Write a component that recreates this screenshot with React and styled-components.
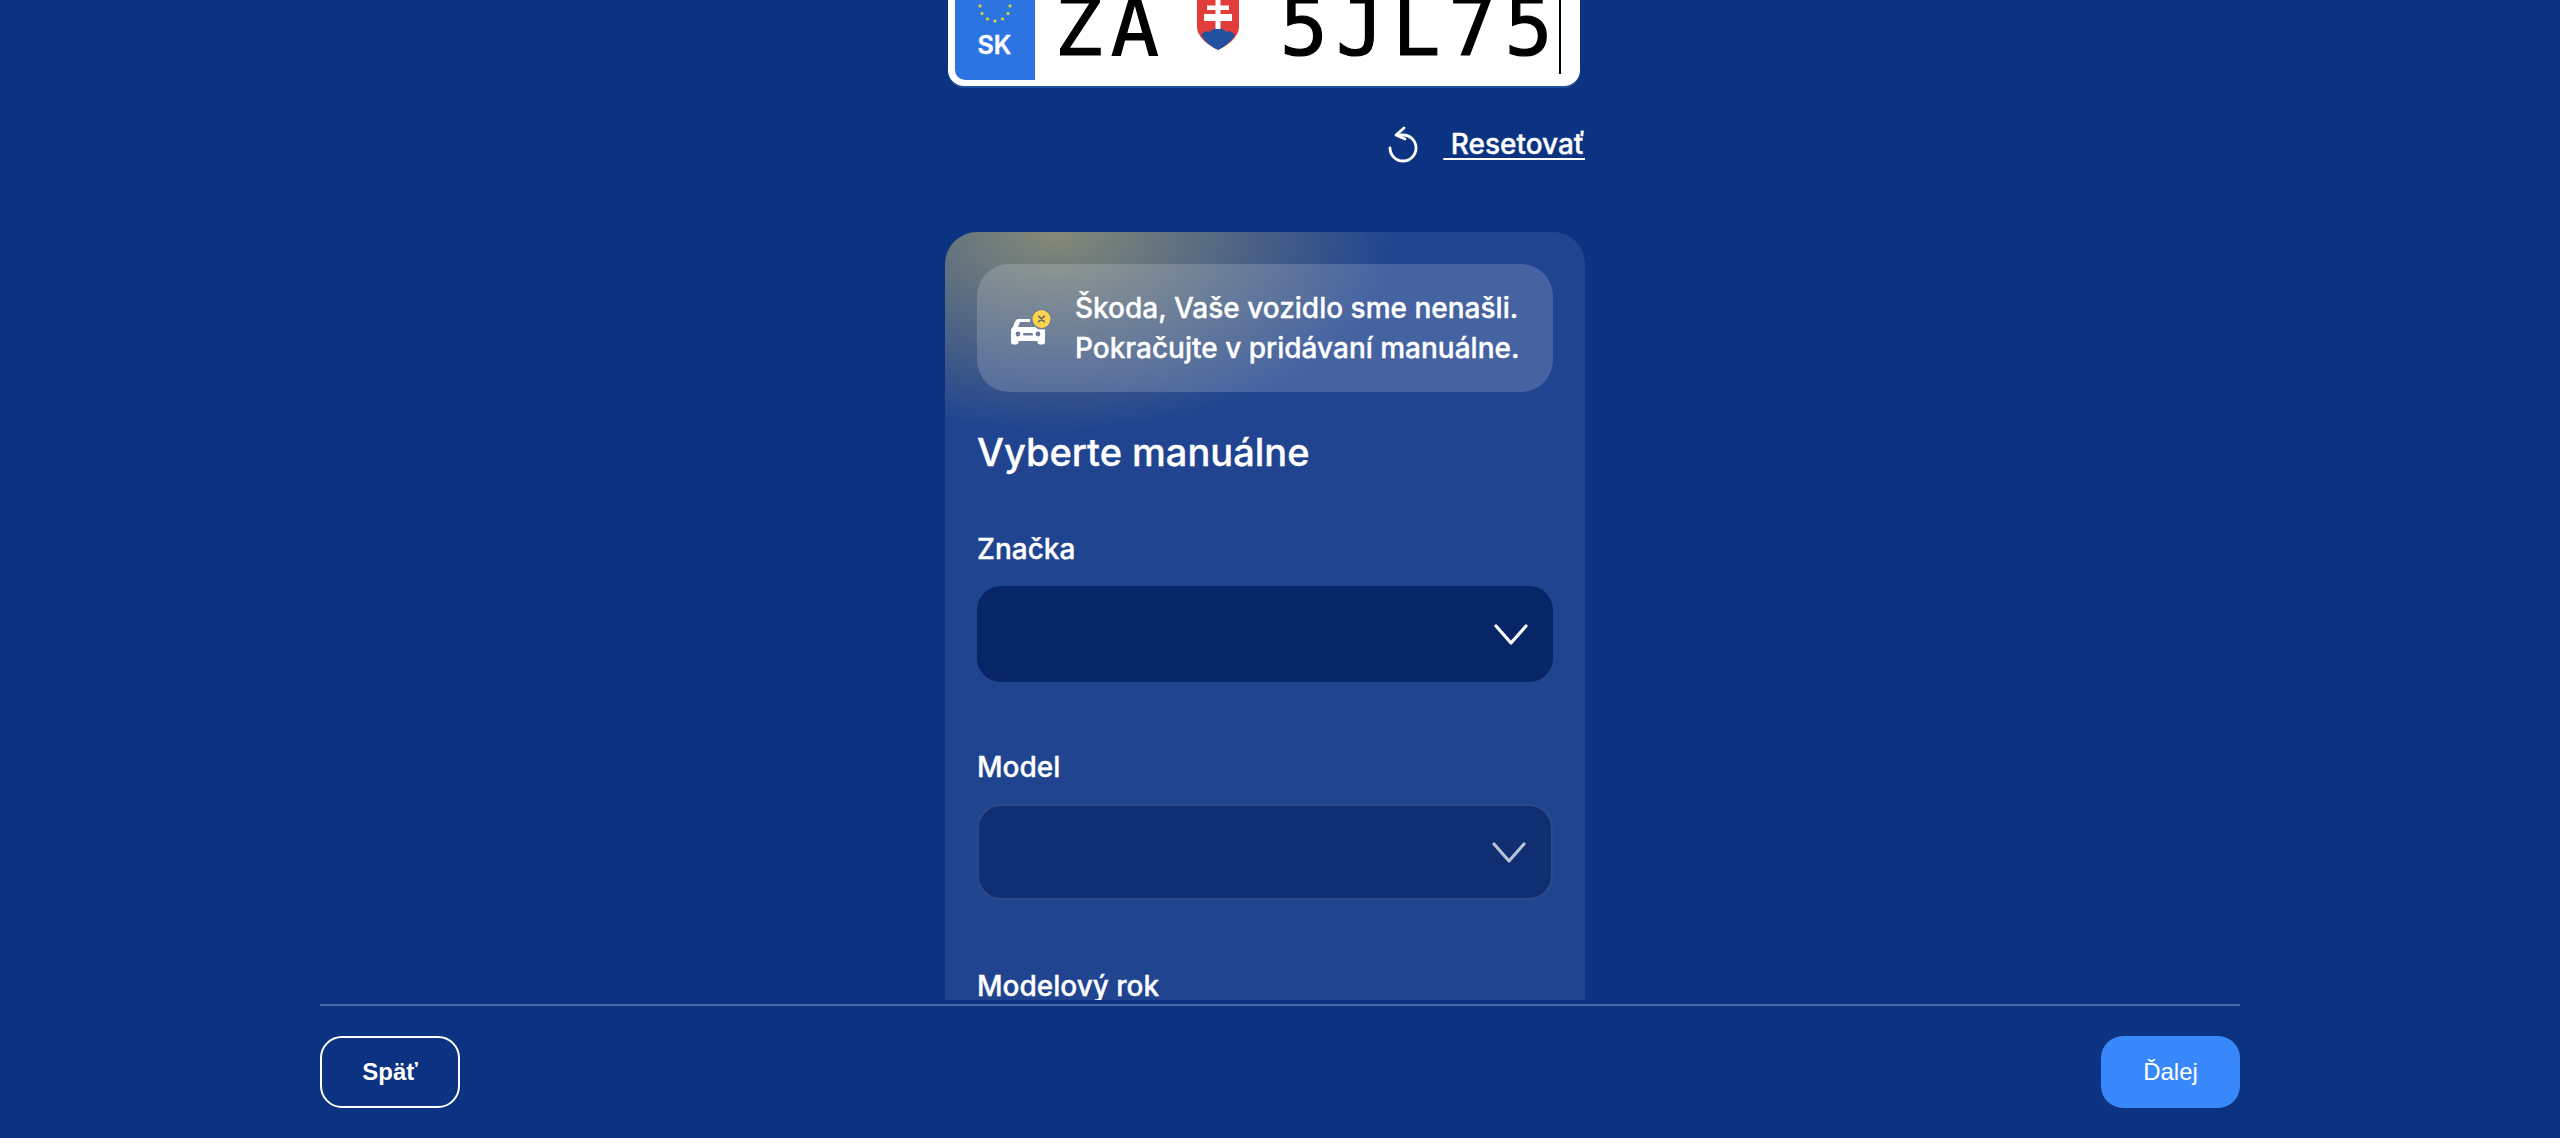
import React from 'react';
import styled, { createGlobalStyle } from 'styled-components';

const GlobalStyle = createGlobalStyle`
  html, body {
    margin: 0;
    padding: 0;
    background: #0c3282;
  }
  * {
    box-sizing: border-box;
  }
`;

const Page = styled.div`
  -webkit-text-stroke: 0.35px #fff;
  background: #0c3282;
  color: #fff;
  display: flex;
  flex-direction: column;
  font-family: Inter, "Noto Sans", sans-serif;
  height: 1138px;
  overflow: hidden;
`;

const Content = styled.main`
  align-items: center;
  display: flex;
  flex-direction: column;
  height: 1000px;
  overflow: hidden;
  padding-right: 30px;
`;

const Plate = styled.div`
  background: #fff;
  border-radius: 16px;
  box-shadow: 0 2px 0 #1f4f9e;
  display: flex;
  flex-shrink: 0;
  height: 140px;
  margin-right: 3px;
  margin-top: -54px;
  padding: 6px 7px;
  width: 632px;
`;

const EuStrip = styled.div`
  align-items: center;
  background: #2b74e2;
  border-bottom-left-radius: 10px;
  display: flex;
  flex-direction: column;
  flex-shrink: 0;
  justify-content: flex-end;
  padding-bottom: 20px;
  width: 80px;
`;

const Country = styled.span`
  font-size: 25px;
  font-weight: 600;
  line-height: 29px;
  margin-top: 5px;
`;

const PlateText = styled.span`
  -webkit-text-stroke: 1.2px #000;
  align-self: flex-end;
  color: #000;
  font-family: "DejaVu Sans Mono", monospace;
  font-size: 80px;
  letter-spacing: 8px;
  line-height: 94px;
  margin-bottom: 5px;
  margin-left: ${p => p.$offset}px;
`;

const Shield = styled.svg`
  align-self: flex-end;
  flex-shrink: 0;
  margin-bottom: 30px;
  margin-left: 30px;
`;

const Caret = styled.span`
  align-self: flex-end;
  background: #000;
  height: 120px;
  margin-bottom: 6px;
  margin-left: -2px;
  width: 2px;
`;

const ResetRow = styled.div`
  align-items: center;
  display: flex;
  flex-shrink: 0;
  gap: 24px;
  justify-content: flex-end;
  margin-top: 39px;
  width: 640px;
`;

const ResetLink = styled.a`
  color: #fff;
  font-size: 28px;
  font-weight: 500;
  line-height: 34px;
  text-decoration: underline;
  text-decoration-thickness: 2px;
  text-underline-offset: 4px;
  white-space: pre;
`;

const Card = styled.section`
  background:
    radial-gradient(ellipse 340px 200px at 110px 0, rgba(252, 222, 90, 0.46), rgba(252, 222, 90, 0) 100%),
    #20448f;
  border-radius: 32px 32px 0 0;
  flex-shrink: 0;
  margin-top: 69px;
  padding: 32px;
  width: 640px;
`;

const Alert = styled.div`
  align-items: center;
  background: rgba(255, 255, 255, 0.17);
  border-radius: 32px;
  display: flex;
  font-size: 28px;
  font-weight: 500;
  gap: 21px;
  height: 128px;
  line-height: 40px;
  padding-left: 33px;
`;

const Heading = styled.h2`
  font-size: 38px;
  font-weight: 550;
  line-height: 44px;
  margin: 38px 0 0;
`;

const Field = styled.div`
  margin-top: ${p => p.$gap}px;
`;

const Label = styled.label`
  display: block;
  font-size: 28px;
  font-weight: 500;
  line-height: 34px;
  margin-bottom: 20px;
`;

const Select = styled.div`
  align-items: center;
  background: ${p => (p.$disabled ? '#102f73' : '#072667')};
  border: 2px solid ${p => (p.$disabled ? '#2b4a88' : '#072667')};
  border-radius: 24px;
  display: flex;
  height: 96px;
  justify-content: flex-end;
  padding-right: ${p => (p.$disabled ? 25 : 23)}px;

  svg {
    opacity: ${p => (p.$disabled ? 0.7 : 1)};
  }
`;

const Footer = styled.footer`
  align-self: center;
  border-top: 2px solid #4a67a6;
  display: flex;
  justify-content: space-between;
  margin-top: 4px;
  padding-top: 30px;
  width: 1920px;
`;

const FooterButton = styled.button`
  -webkit-text-stroke: 0;
  background: ${p => (p.$primary ? '#3887fb' : 'transparent')};
  border: ${p => (p.$primary ? '0' : '2.5px solid #fff')};
  border-radius: 22px;
  color: #fff;
  font-family: "Liberation Sans", Arial, sans-serif;
  font-size: 24px;
  font-weight: ${p => (p.$primary ? 400 : 700)};
  height: 72px;
  padding: 0;
  width: ${p => (p.$primary ? 139 : 140)}px;
`;

const starPoints = (cx, cy, r) =>
  Array.from({ length: 10 }, (_, i) => {
    const radius = i % 2 ? r * 0.42 : r;
    const angle = (Math.PI / 5) * i - Math.PI / 2;
    return `${cx + radius * Math.cos(angle)},${cy + radius * Math.sin(angle)}`;
  }).join(' ');

const EuStars = () => (
  <svg width="40" height="40" viewBox="0 0 40 40" aria-hidden="true">
    {Array.from({ length: 12 }, (_, i) => {
      const angle = (Math.PI / 6) * i;
      return (
        <polygon
          key={i}
          fill="#f2d631"
          points={starPoints(20 + 15 * Math.cos(angle), 20 + 15 * Math.sin(angle), 2.4)}
        />
      );
    })}
  </svg>
);

const SkShield = () => (
  <Shield width="42" height="70" viewBox="0 0 42 70" aria-hidden="true">
    <path d="M0 0H42V47C42 57 31 65 21 70C11 65 0 57 0 47Z" fill="#e23d3a" />
    <path
      d="M4 55C6 52 10 50 13 52C15 49 18 48 21 48C24 48 27 49 29 52C32 50 36 52 38 55C34 62 27 67 21 70C15 67 8 62 4 55Z"
      fill="#21519f"
    />
    <path
      d="M18.5 49V41H7V34H18.5V30H10V25.5H18.5V16H23.5V25.5H32V30H23.5V34H35V41H23.5V49Z"
      fill="#fff"
    />
  </Shield>
);

const ResetIcon = () => (
  <svg width="32" height="38" viewBox="0 0 32 38" fill="none" stroke="#fff" strokeWidth="2.8" strokeLinecap="round" strokeLinejoin="round" aria-hidden="true">
    <path d="M10 10H16A13 13 0 1 1 3 23" />
    <path d="M17 3L9 10L18 14" />
  </svg>
);

const CarIcon = () => (
  <svg width="44" height="40" viewBox="0 0 44 40" aria-hidden="true">
    <path
      d="M9 11C6.5 11 5.5 12.5 4.5 15L3 19C1.5 20 1 21.5 1 23V34C1 35.5 2 36.5 3.5 36.5H6C7.5 36.5 8.5 35.5 8.5 34V33H27.5V34C27.5 35.5 28.5 36.5 30 36.5H32.5C34 36.5 35 35.5 35 34V23C35 21.5 34.3 20 33 19H8L10 14H20V11Z"
      fill="#fff"
    />
    <path d="M27 19H33V22H27Z" fill="#fff" />
    <circle cx="8" cy="26" r="2.4" fill="#6c7c9c" />
    <circle cx="28" cy="26" r="2.4" fill="#6c7c9c" />
    <rect x="13" y="25" width="10" height="2.6" rx="1.3" fill="#6c7c9c" />
    <circle cx="31.5" cy="11" r="10.5" fill="#6f7f99" />
    <circle cx="31.5" cy="11" r="9" fill="#fcd34d" />
    <path d="M28.8 8.3L34.2 13.7M34.2 8.3L28.8 13.7" stroke="#6b6d62" strokeWidth="1.8" strokeLinecap="round" />
  </svg>
);

const Chevron = () => (
  <svg width="34" height="21" viewBox="0 0 34 21" fill="none" stroke="#fff" strokeWidth="3.2" strokeLinecap="round" strokeLinejoin="round" aria-hidden="true">
    <path d="M2 2L17 19L32 2" />
  </svg>
);

const fields = [
  { name: 'Značka', gap: 58 },
  { name: 'Model', gap: 68, disabled: true },
  { name: 'Modelový rok', gap: 69, disabled: true },
];

export default function App() {
  return (
    <Page>
      <GlobalStyle />
      <Content>
        <Plate>
          <EuStrip>
            <EuStars />
            <Country>SK</Country>
          </EuStrip>
          <PlateText $offset={20}>ZA</PlateText>
          <SkShield />
          <PlateText $offset={41}>5JL75</PlateText>
          <Caret />
        </Plate>
        <ResetRow>
          <ResetIcon />
          <ResetLink href="#"> Resetovať</ResetLink>
        </ResetRow>
        <Card>
          <Alert>
            <CarIcon />
            <div>
              Škoda, Vaše vozidlo sme nenašli.
              <br />
              Pokračujte v pridávaní manuálne.
            </div>
          </Alert>
          <Heading>Vyberte manuálne</Heading>
          {fields.map(field => (
            <Field key={field.name} $gap={field.gap}>
              <Label>{field.name}</Label>
              <Select $disabled={field.disabled}>
                <Chevron />
              </Select>
            </Field>
          ))}
        </Card>
      </Content>
      <Footer>
        <FooterButton>Späť</FooterButton>
        <FooterButton $primary>Ďalej</FooterButton>
      </Footer>
    </Page>
  );
}
